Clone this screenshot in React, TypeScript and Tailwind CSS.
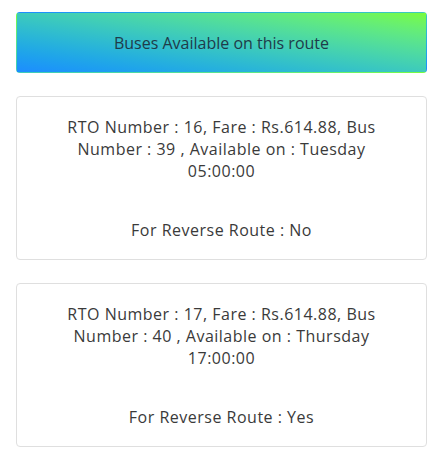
import React from "react";

type Bus = {
  rto: number;
  fare: string;
  busNo: number;
  day: string;
  time: string;
  reverse: boolean;
};

const buses: Bus[] = [
  { rto: 16, fare: "614.88", busNo: 39, day: "Tuesday", time: "05:00:00", reverse: false },
  { rto: 17, fare: "614.88", busNo: 40, day: "Thursday", time: "17:00:00", reverse: true },
];

export default function App() {
  return (
    <div
      className="w-[443px] min-h-[475px] bg-white px-4 pt-3 text-[16px] leading-[22px] text-[#3a3a3a]"
      style={{ fontFamily: '"Open Sans", "Noto Sans", sans-serif' }}
    >
      <div className="flex h-[61px] items-center justify-center rounded border border-transparent bg-linear-to-tr from-[#1e8cff] to-[#78fc3a] text-[#1f3b4a]">
        Buses Available on this route
      </div>

      <div className="mt-[23px] flex flex-col gap-[23px]">
        {buses.map((b) => (
          <div key={b.rto} className="rounded border border-[#dfdfdf] px-[38px] pt-[19px] pb-[18px] text-center tracking-[0.5px]">
            <p>
              RTO Number : {b.rto}, Fare : Rs.{b.fare}, Bus Number : {b.busNo} , Available on : {b.day} {b.time}
            </p>
            <p className="mt-[37px]">For Reverse Route : {b.reverse ? "Yes" : "No"}</p>
          </div>
        ))}
      </div>
    </div>
  );
}
